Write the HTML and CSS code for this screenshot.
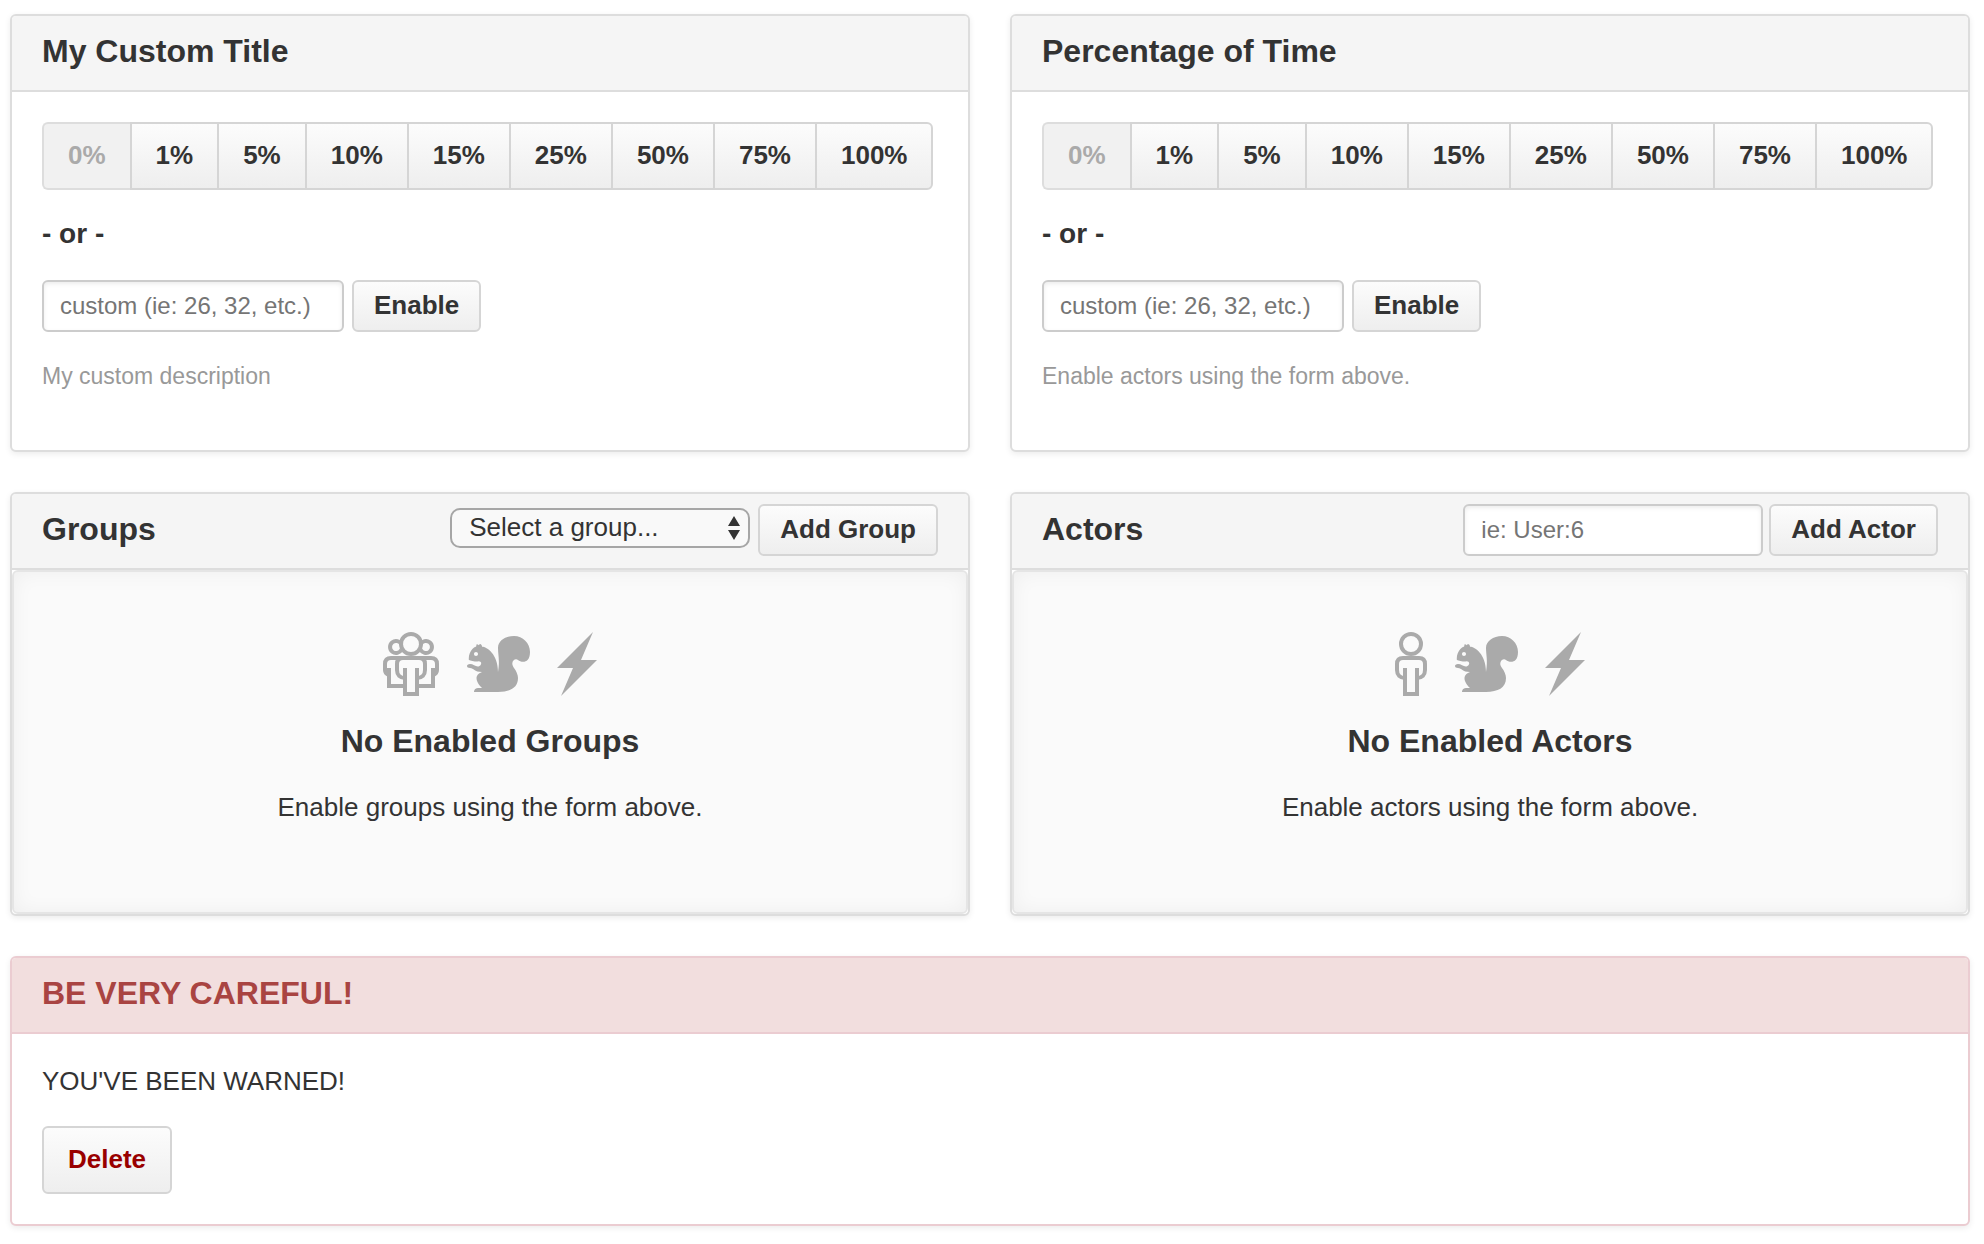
FILE: index.html
```html
<!DOCTYPE html>
<html lang="en">
<head>
<meta charset="utf-8">
<meta name="viewport" content="width=device-width, initial-scale=1">
<title>Feature settings</title>
<link rel="stylesheet" href="styles.css">
</head>
<body>
<svg class="sprite" aria-hidden="true">
  <symbol id="icon-organization" viewBox="0 0 56 64">
    <g fill="none" stroke="currentColor" stroke-width="4">
      <circle cx="28" cy="12" r="10"/>
      <path d="M18.500 17.500A6 6 0 1 1 18.500 12.500M37.500 12.500A6 6 0 1 1 37.500 17.500"/>
      <path d="M22 46C17 46 14 43 14 38V32C14 28 16 26 20 26H36C40 26 42 28 42 32V38C42 43 39 46 34 46"/>
      <path d="M22 36V62H34V36"/>
      <path d="M20 26H8C4 26 2 28 2 32V38C2 41 3 42 6 43M36 26H48C52 26 54 28 54 32V38C54 41 53 42 50 43"/>
      <path d="M6 36V54H20M50 36V54H36"/>
    </g>
  </symbol>
  <symbol id="icon-person" viewBox="0 0 32 64">
    <g fill="none" stroke="currentColor" stroke-width="4">
      <circle cx="16" cy="12" r="10"/>
      <path d="M10 46C5 46 2 43 2 38V32C2 28 4 26 8 26H24C28 26 30 28 30 32V38C30 43 27 46 22 46"/>
      <path d="M10 36V62H22V36"/>
    </g>
  </symbol>
  <symbol id="icon-squirrel" viewBox="0 0 16 16">
    <path fill="currentColor" d="M12 1C9.790 1 8 2.310 8 3.920c0 1.940.5 3.030 0 6.080 0-4.500-2.770-6.340-4-6.340.05-.5-.48-.66-.48-.66s-.22.11-.3.34c-.27-.31-.56-.27-.56-.27l-.13.58S.7 4.290.68 6.870c.2.330 1.530.6 2.470.43.890.05.67.79.47.99C2.780 9.130 2 8 1 8S0 9 1 9s1 1 3 1c-3.090 1.200 0 4 0 4H3c-1 0-1 1-1 1h6c3 0 5-1 5-3.470 0-.85-.43-1.790-1-2.530-1.110-1.460.23-2.680 1-2 .77.68 3 1 3-2 0-2.210-1.790-4-4-4zM2.500 6c-.28 0-.5-.22-.5-.5s.22-.5.5-.5.5.22.5.5-.22.5-.5.5z"/>
  </symbol>
  <symbol id="icon-zap" viewBox="0 0 10 16">
    <path fill="currentColor" d="M10 7H6l3-7-9 9h4l-3 7 9-9z"/>
  </symbol>
</svg>

<main class="page">
  <section class="panel">
    <header class="panel-header"><h2>My Custom Title</h2></header>
    <div class="panel-body">
      <div class="button-group">
        <button type="button" class="button" disabled>0%</button>
        <button type="button" class="button">1%</button>
        <button type="button" class="button">5%</button>
        <button type="button" class="button">10%</button>
        <button type="button" class="button">15%</button>
        <button type="button" class="button">25%</button>
        <button type="button" class="button">50%</button>
        <button type="button" class="button">75%</button>
        <button type="button" class="button">100%</button>
      </div>
      <p class="divider">- or -</p>
      <form class="inline-form">
        <input type="text" class="field" aria-label="Custom percentage of actors" placeholder="custom (ie: 26, 32, etc.)">
        <button type="submit" class="button button-small">Enable</button>
      </form>
      <p class="description">My custom description</p>
    </div>
  </section>

  <section class="panel">
    <header class="panel-header"><h2>Percentage of Time</h2></header>
    <div class="panel-body">
      <div class="button-group">
        <button type="button" class="button" disabled>0%</button>
        <button type="button" class="button">1%</button>
        <button type="button" class="button">5%</button>
        <button type="button" class="button">10%</button>
        <button type="button" class="button">15%</button>
        <button type="button" class="button">25%</button>
        <button type="button" class="button">50%</button>
        <button type="button" class="button">75%</button>
        <button type="button" class="button">100%</button>
      </div>
      <p class="divider">- or -</p>
      <form class="inline-form">
        <input type="text" class="field" aria-label="Custom percentage of time" placeholder="custom (ie: 26, 32, etc.)">
        <button type="submit" class="button button-small">Enable</button>
      </form>
      <p class="description">Enable actors using the form above.</p>
    </div>
  </section>

  <section class="panel">
    <header class="panel-header">
      <h2>Groups</h2>
      <form class="inline-form">
        <div class="select">
          <select aria-label="Group"><option>Select a group...</option></select>
          <svg class="select-arrows" viewBox="0 0 12 24" aria-hidden="true"><path fill="currentColor" d="M6 0L12 10H0zM6 24L0 14H12z"/></svg>
        </div>
        <button type="submit" class="button button-small">Add Group</button>
      </form>
    </header>
    <div class="blankslate">
      <div class="icons" aria-hidden="true">
        <svg class="icon-organization"><use href="#icon-organization"/></svg>
        <svg class="icon-squirrel"><use href="#icon-squirrel"/></svg>
        <svg class="icon-zap"><use href="#icon-zap"/></svg>
      </div>
      <h3>No Enabled Groups</h3>
      <p>Enable groups using the form above.</p>
    </div>
  </section>

  <section class="panel">
    <header class="panel-header">
      <h2>Actors</h2>
      <form class="inline-form inline-form-tight">
        <input type="text" class="field" aria-label="Actor" placeholder="ie: User:6">
        <button type="submit" class="button button-small">Add Actor</button>
      </form>
    </header>
    <div class="blankslate">
      <div class="icons" aria-hidden="true">
        <svg class="icon-person"><use href="#icon-person"/></svg>
        <svg class="icon-squirrel"><use href="#icon-squirrel"/></svg>
        <svg class="icon-zap"><use href="#icon-zap"/></svg>
      </div>
      <h3>No Enabled Actors</h3>
      <p>Enable actors using the form above.</p>
    </div>
  </section>

  <section class="panel panel-danger">
    <header class="panel-header"><h2>BE VERY CAREFUL!</h2></header>
    <div class="panel-body">
      <p class="warning">YOU'VE BEEN WARNED!</p>
      <button type="button" class="button button-danger">Delete</button>
    </div>
  </section>
</main>
</body>
</html>
```
FILE: styles.css
```css
* {
  box-sizing: border-box;
}

body {
  margin: 0;
  background: #fff;
  color: #333;
  font: 26px/34px "Liberation Sans", Arial, Helvetica, sans-serif;
}

h2,
h3,
p {
  margin: 0;
}

.sprite {
  display: none;
}

.page {
  display: grid;
  grid-template-columns: repeat(2, minmax(0, 1fr));
  gap: 40px;
  padding: 14px 14px 18px 10px;
}

/* Panels */

.panel {
  border: 2px solid #ddd;
  border-radius: 6px;
  background: #fff;
  box-shadow: 0 2px 6px rgba(0, 0, 0, 0.08);
}

.panel-header {
  display: flex;
  align-items: center;
  justify-content: space-between;
  min-height: 76px;
  padding: 0 30px 2px;
  border-bottom: 2px solid #ddd;
  border-radius: 4px 4px 0 0;
  background: #f5f5f5;
}

.panel-header h2 {
  margin-bottom: 2px;
  font-size: 32px;
  line-height: 40px;
}

.panel-body {
  padding: 30px;
}

.panel-danger {
  grid-column: 1 / -1;
  border-color: #ebccd1;
}

.panel-danger .panel-header {
  border-color: #ebccd1;
  background: #f2dede;
  color: #a94442;
}

/* Controls */

.button {
  height: 68px;
  padding: 0 24px 2px;
  border: 2px solid #d5d5d5;
  border-radius: 6px;
  background: linear-gradient(#fcfcfc, #eee);
  color: #333;
  font: bold 26px/34px "Liberation Sans", Arial, Helvetica, sans-serif;
  white-space: nowrap;
}

.button:disabled {
  border-color: #ddd;
  background: #f1f1f1;
  color: #aaa;
}

.button-small {
  height: 52px;
  padding: 0 20px 2px;
}

.button-danger {
  color: #900;
}

.button-group {
  display: flex;
}

.button-group .button {
  border-radius: 0;
}

.button-group .button + .button {
  border-left-width: 2px;
}

.button-group .button:not(:last-child) {
  border-right-width: 0;
}

.button-group .button:first-child {
  border-radius: 6px 0 0 6px;
}

.button-group .button:last-child {
  border-radius: 0 6px 6px 0;
}

.inline-form {
  display: flex;
  align-items: center;
  gap: 8px;
}

.inline-form-tight {
  gap: 6px;
}

.field {
  width: 302px;
  height: 52px;
  padding: 0 16px;
  border: 2px solid #ccc;
  border-radius: 6px;
  background: #fff;
  box-shadow: inset 0 2px 4px rgba(0, 0, 0, 0.075);
  color: #333;
  font: 24px/34px "Liberation Sans", Arial, Helvetica, sans-serif;
}

.field::placeholder {
  color: #757575;
  opacity: 1;
}

.panel-header .field {
  width: 300px;
}

.select {
  position: relative;
  display: flex;
  width: 300px;
  margin-bottom: 4px;
}

.select select {
  width: 100%;
  height: 40px;
  padding: 0 36px 2px 17px;
  appearance: none;
  border: 2px solid #a6a6a6;
  border-radius: 10px;
  background: #f9f9f9;
  color: #333;
  font: 26px/34px "Liberation Sans", Arial, Helvetica, sans-serif;
}

.select-arrows {
  position: absolute;
  top: 8px;
  right: 10px;
  width: 12px;
  height: 24px;
  pointer-events: none;
}

/* Text */

.divider {
  margin: 26px 0 28px;
  font-size: 28px;
  font-weight: bold;
  line-height: 36px;
}

.description {
  margin: 27px 0;
  color: #999;
  font-size: 23px;
}

.warning {
  margin-bottom: 28px;
}

/* Empty state */

.blankslate {
  padding: 60px 30px 88px;
  border: 2px solid #e5e5e5;
  border-radius: 6px;
  background: #fafafa;
  box-shadow: inset 0 0 20px rgba(0, 0, 0, 0.05);
  text-align: center;
}

.icons {
  display: flex;
  justify-content: center;
  gap: 27px;
  color: #aaa;
}

.icons svg {
  height: 64px;
}

.icon-organization {
  width: 56px;
}

.icon-person {
  width: 32px;
}

.icon-squirrel {
  width: 64px;
}

.icon-zap {
  width: 40px;
}

.blankslate h3 {
  margin: 25px 0 29px;
  font-size: 32px;
  line-height: 40px;
}
```
